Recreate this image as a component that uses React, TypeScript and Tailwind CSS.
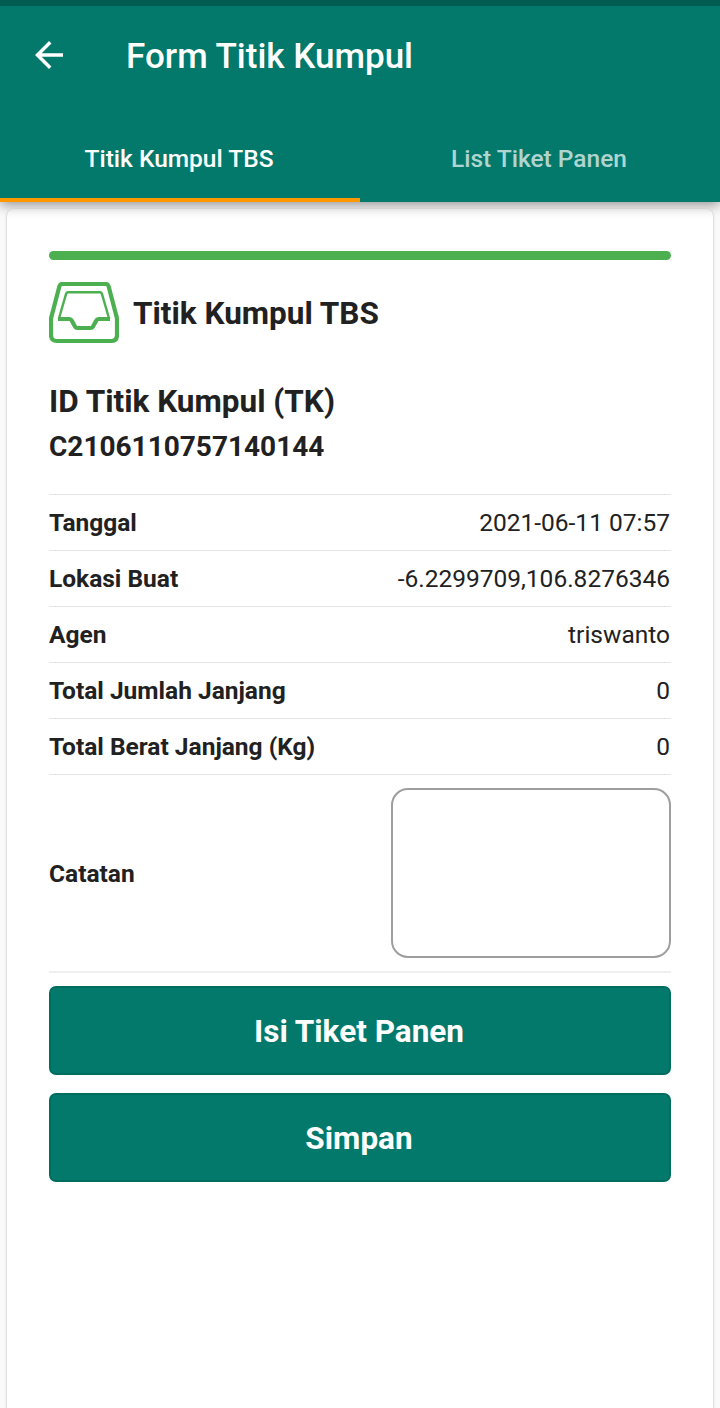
const details = [
  { label: 'Tanggal', value: '2021-06-11 07:57' },
  { label: 'Lokasi Buat', value: '-6.2299709,106.8276346' },
  { label: 'Agen', value: 'triswanto' },
  { label: 'Total Jumlah Janjang', value: '0' },
  { label: 'Total Berat Janjang (Kg)', value: '0' },
];

function BackArrow() {
  return (
    <svg className="h-[42px] w-[42px] shrink-0" viewBox="0 0 24 24" fill="white">
      <path d="M20 11H7.83l5.59-5.59L12 4l-8 8 8 8 1.41-1.41L7.83 13H20v-2z" />
    </svg>
  );
}

function TrayIcon() {
  return (
    <svg className="h-[62px] w-[70px] shrink-0" viewBox="0 0 70 62" fill="none" stroke="#4caf50" strokeLinejoin="round">
      <path
        d="M13 2H57Q59 2 59.6 4.2L67.5 34.5Q68 36 68 38V53Q68 59 62 59H8Q2 59 2 53V38Q2 36 2.5 34.5L10.4 4.2Q11 2 13 2Z"
        strokeWidth="4.2"
      />
      <path d="M9.8 37L17 12.2Q17.5 10.2 19 10.2H51Q52.5 10.2 53 12.2L60.2 37" strokeWidth="2.4" />
      <path d="M9 37H20.5Q22 37 22.7 38.4L26 44.6Q26.9 46 28.5 46H41.5Q43.1 46 44 44.6L47.3 38.4Q48 37 49.5 37H61" strokeWidth="4.2" />
    </svg>
  );
}

export default function App() {
  return (
    <div className="flex h-[1408px] w-[720px] flex-col overflow-hidden bg-[#fafafa] font-[Roboto,sans-serif] text-[#212121]">
      <header className="z-10 flex h-[202px] shrink-0 flex-col bg-[#02796b] text-white shadow-[0_3px_12px_rgba(0,0,0,0.42)]">
        <div className="h-1.5 bg-[#005b50]" />
        <div className="flex h-[98px] items-center gap-[56px] pl-7">
          <BackArrow />
          <h1 className="pt-0.5 text-[35px] leading-none font-medium">Form Titik Kumpul</h1>
        </div>
        <nav className="grid flex-1 grid-cols-2 text-[24.5px] font-medium">
          <button className="flex items-center justify-center border-b-4 border-[#ff9800] pt-[16px] pr-0.5">Titik Kumpul TBS</button>
          <button className="flex items-center justify-center pt-[12px] pr-0.5 text-white/70">List Tiket Panen</button>
        </nav>
      </header>

      <main className="mx-[7px] mt-[7px] flex-1 rounded-t-[7px] bg-white px-[42px] pt-[42px] shadow-[0_1px_3px_rgba(0,0,0,0.28)]">
        <div className="h-[9px] rounded-full bg-[#4caf50]" />
        <div className="mt-[22px] flex h-[62px] items-center gap-[14px]">
          <TrayIcon />
          <h2 className="pt-0.5 text-[31.5px] leading-none font-bold">Titik Kumpul TBS</h2>
        </div>
        <h2 className="mt-[37px] text-[31.5px] leading-[42px] font-bold">ID Titik Kumpul (TK)</h2>
        <p className="mt-1 text-[28px] leading-[40px] font-bold">C2106110757140144</p>

        <dl className="mt-[27px] border-t-[1.5px] border-[#e5e5e5] text-[24.5px]">
          {details.map((item) => (
            <div key={item.label} className="flex h-14 items-center justify-between border-b border-[#e5e5e5] pt-0.5">
              <dt className="font-bold">{item.label}</dt>
              <dd className="pr-px">{item.value}</dd>
            </div>
          ))}
        </dl>
        <div className="flex h-[198px] items-center justify-between border-b-2 border-[#efefef] text-[24.5px]">
          <label htmlFor="catatan" className="pt-0.5 font-bold">Catatan</label>
          <textarea id="catatan" className="h-[170px] w-[280px] resize-none rounded-[17px] border-2 border-[#9e9e9e] p-3 outline-none" />
        </div>

        <div className="mt-[13px] flex flex-col gap-[17.5px] text-[31.5px] font-bold text-white">
          <button className="h-[89.25px] rounded-[7px] border-2 border-[#006d60] bg-[#02796b] pt-0.5 pr-0.5">Isi Tiket Panen</button>
          <button className="h-[89.25px] rounded-[7px] border-2 border-[#006d60] bg-[#02796b] pt-0.5 pr-0.5">Simpan</button>
        </div>
      </main>
    </div>
  );
}
